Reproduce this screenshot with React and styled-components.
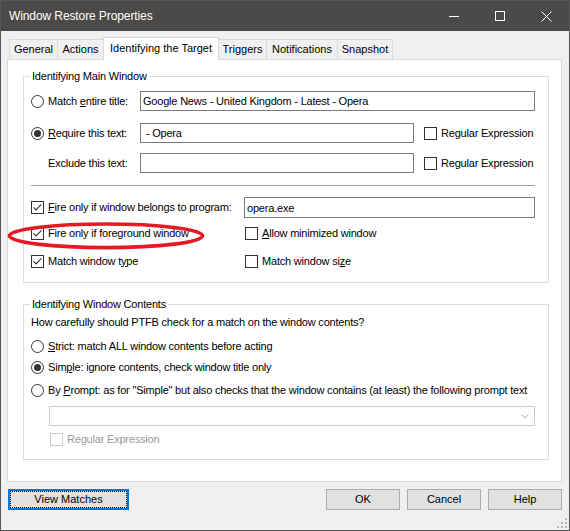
import React from 'react';
import styled, { createGlobalStyle } from 'styled-components';

const GlobalStyle = createGlobalStyle`
  html, body { margin: 0; padding: 0; background: #f0f0f0; }
  body {
    font-family: "Liberation Sans", Arial, sans-serif;
    font-size: 11px;
    letter-spacing: -0.2px;
    line-height: 13px;
    color: #000;
  }
  * { box-sizing: border-box; }
`;

const Window = styled.div`
  position: relative;
  width: 570px;
  height: 531px;
  border: 1px solid #585755;
  background: #f0f0f0;
  display: flex;
  flex-direction: column;
`;

const TitleBar = styled.div`
  height: 30px;
  flex: none;
  background: #4b4a48;
  color: #fff;
  display: flex;
  align-items: center;
  padding-left: 8px;
  font-size: 12px;
`;

const TitleText = styled.span`
  flex: 1;
  letter-spacing: -0.1px;
`;

const CaptionButton = styled.div`
  width: 46px;
  height: 30px;
  display: flex;
  align-items: center;
  justify-content: center;
`;

const Body = styled.div`
  flex: 1;
  padding: 6px 7px 0 6px;
  display: flex;
  flex-direction: column;
`;

const TabRow = styled.div`
  position: relative;
  z-index: 1;
  height: 22px;
  display: flex;
  align-items: flex-end;
  padding-left: 2px;
`;

const Tab = styled.div`
  width: ${p => p.$w}px;
  height: ${p => (p.$active ? 23 : 20)}px;
  margin-bottom: ${p => (p.$active ? -1 : 0)}px;
  margin-left: ${p => (p.$first ? 0 : -1)}px;
  border: 1px solid #d9d9d9;
  border-bottom: none;
  background: ${p => (p.$active ? '#fff' : '#f0f0f0')};
  display: flex;
  align-items: center;
  justify-content: center;
  padding-bottom: ${p => (p.$active ? 2 : 0)}px;
  white-space: nowrap;
  letter-spacing: 0;
`;

const Panel = styled.div`
  height: 423px;
  background: #fff;
  border: 1px solid #d9d9d9;
  padding: 16px 12px 0 15px;
  display: flex;
  flex-direction: column;
  gap: 21px;
`;

const Group = styled.div`
  position: relative;
  height: ${p => p.$h}px;
  border: 1px solid #dcdcdc;
  padding-left: 7px;
  display: flex;
  flex-direction: column;
`;

const Legend = styled.span`
  position: absolute;
  top: -7px;
  left: 6px;
  padding: 0 2px;
  background: #fff;
`;

const Row = styled.div`
  display: flex;
  align-items: center;
  height: ${p => p.$h}px;
  margin-top: ${p => p.$mt}px;
  margin-left: ${p => p.$ml || 0}px;
  white-space: nowrap;
`;

const Cell = styled.div`
  width: ${p => p.$w}px;
  padding-left: ${p => p.$pl || 0}px;
  display: flex;
  align-items: center;
  flex: none;
`;

const Separator = styled.div`
  width: 504px;
  height: 1px;
  background: #a0a0a0;
  margin-top: ${p => p.$mt}px;
`;

const TextBox = styled.input`
  width: ${p => p.$w}px;
  height: ${p => p.$h || 20}px;
  border: 1px solid #7a7a7a;
  padding: 0 2px;
  font: inherit;
  letter-spacing: inherit;
  color: #000;
  background: #fff;
  outline: none;
  white-space: pre;
`;

const Combo = styled.div`
  width: 486px;
  height: 20px;
  border: 1px solid #cccccc;
  background: #fff;
  display: flex;
  align-items: center;
  justify-content: flex-end;
  padding-right: 5px;
`;

const Choice = styled.label`
  display: flex;
  align-items: center;
  gap: 4px;
  margin-left: ${p => p.$ml || 0}px;
  color: ${p => (p.$disabled ? '#9a9a9a' : '#000')};
`;

const RadioBox = styled.span`
  position: relative;
  width: 13px;
  height: 13px;
  border: 1px solid #333;
  border-radius: 50%;
  background: #fff;
  flex: none;
  &::after {
    content: '';
    display: ${p => (p.$on ? 'block' : 'none')};
    position: absolute;
    left: 2px;
    top: 2px;
    width: 7px;
    height: 7px;
    border-radius: 50%;
    background: #333;
  }
`;

const CheckBox = styled.span`
  width: 13px;
  height: 13px;
  border: 1px solid ${p => (p.$disabled ? '#cccccc' : '#333')};
  background: #fff;
  flex: none;
  display: flex;
`;

const Key = styled.span`
  text-decoration: underline;
  text-underline-offset: 1px;
`;

const ButtonRow = styled.div`
  display: flex;
  margin-top: 7px;
  padding-left: 1px;
  gap: 7px;
  letter-spacing: 0;
`;

const Button = styled.div`
  width: ${p => p.$w || 74}px;
  height: 21px;
  margin-left: ${p => (p.$push ? 'auto' : '0')};
  background: #e1e1e1;
  border: ${p => (p.$focus ? '2px solid #0078d7' : '1px solid #adadad')};
  display: flex;
  align-items: center;
  justify-content: center;
  padding: ${p => (p.$focus ? '0' : '1px')};
`;

const FocusRing = styled.div`
  width: 100%;
  height: 100%;
  outline: 1px dotted #000;
  outline-offset: -1px;
  display: flex;
  align-items: center;
  justify-content: center;
`;

const Highlight = styled.svg`
  position: absolute;
  left: 4px;
  top: 218px;
  pointer-events: none;
`;

const Grip = styled.svg`
  position: absolute;
  right: 1px;
  bottom: 1px;
`;

const Radio = ({ on, children }) => (
  <Choice>
    <RadioBox $on={on} />
    <span>{children}</span>
  </Choice>
);

const Check = ({ on, disabled, ml, children }) => (
  <Choice $ml={ml} $disabled={disabled}>
    <CheckBox $disabled={disabled}>
      {on && (
        <svg width="11" height="11" viewBox="0 0 11 11">
          <polyline points="1.6,5.4 4,7.9 9.4,2.4" fill="none" stroke="#333" strokeWidth="1.1" />
        </svg>
      )}
    </CheckBox>
    <span>{children}</span>
  </Choice>
);

const tabs = [
  { label: 'General', w: 49 },
  { label: 'Actions', w: 47 },
  { label: 'Identifying the Target', w: 116, active: true },
  { label: 'Triggers', w: 49 },
  { label: 'Notifications', w: 72 },
  { label: 'Snapshot', w: 56 },
];

export default function App() {
  return (
    <>
      <GlobalStyle />
      <Window>
        <TitleBar>
          <TitleText>Window Restore Properties</TitleText>
          <CaptionButton>
            <svg width="10" height="10" viewBox="0 0 10 10">
              <line x1="0" y1="5.5" x2="10" y2="5.5" stroke="#fff" strokeWidth="1" />
            </svg>
          </CaptionButton>
          <CaptionButton>
            <svg width="10" height="10" viewBox="0 0 10 10">
              <rect x="0.5" y="0.5" width="9" height="9" fill="none" stroke="#fff" strokeWidth="1" />
            </svg>
          </CaptionButton>
          <CaptionButton>
            <svg width="11" height="11" viewBox="0 0 11 11">
              <path d="M0.5 0.5 L10.5 10.5 M10.5 0.5 L0.5 10.5" stroke="#fff" strokeWidth="1" />
            </svg>
          </CaptionButton>
        </TitleBar>

        <Body>
          <TabRow>
            {tabs.map((t, i) => (
              <Tab key={t.label} $w={t.w} $active={t.active} $first={i === 0}>
                {t.label}
              </Tab>
            ))}
          </TabRow>

          <Panel>
            <Group $h={207}>
              <Legend>Identifying Main Window</Legend>
              <Row $h={20} $mt={14}>
                <Cell $w={109}>
                  <Radio>Match <Key>e</Key>ntire title:</Radio>
                </Cell>
                <TextBox $w={395} readOnly value="Google News - United Kingdom - Latest - Opera" />
              </Row>
              <Row $h={20} $mt={12}>
                <Cell $w={109}>
                  <Radio on><Key>R</Key>equire this text:</Radio>
                </Cell>
                <TextBox $w={274} readOnly value=" - Opera" />
                <Check ml={10}>Regular Expression</Check>
              </Row>
              <Row $h={20} $mt={10}>
                <Cell $w={109} $pl={17}>Exclude this text:</Cell>
                <TextBox $w={274} readOnly value="" />
                <Check ml={10}>Regular Expression</Check>
              </Row>
              <Separator $mt={12} />
              <Row $h={21} $mt={11}>
                <Cell $w={213}>
                  <Check on><Key>F</Key>ire only if window belongs to program:</Check>
                </Cell>
                <TextBox $w={291} $h={21} readOnly value="opera.exe" />
              </Row>
              <Row $h={14} $mt={8}>
                <Cell $w={214}>
                  <Check on>Fire only if foreground window</Check>
                </Cell>
                <Check><Key>A</Key>llow minimized window</Check>
              </Row>
              <Row $h={14} $mt={14}>
                <Cell $w={214}>
                  <Check on>Match window t<Key>y</Key>pe</Check>
                </Cell>
                <Check>Match window si<Key>z</Key>e</Check>
              </Row>
            </Group>

            <Group $h={156}>
              <Legend>Identifying Window Contents</Legend>
              <Row $h={14} $mt={10}>How carefully should PTFB check for a match on the window contents?</Row>
              <Row $h={14} $mt={10}>
                <Radio><Key>S</Key>trict: match ALL window contents before acting</Radio>
              </Row>
              <Row $h={14} $mt={7}>
                <Radio on>Sim<Key>p</Key>le: ignore contents, check window title only</Radio>
              </Row>
              <Row $h={14} $mt={9}>
                <Radio>By <Key>P</Key>rompt: as for "Simple" but also checks that the window contains (at least) the following prompt text</Radio>
              </Row>
              <Row $h={20} $mt={9} $ml={18}>
                <Combo>
                  <svg width="8" height="5" viewBox="0 0 8 5">
                    <polyline points="0.5,0.5 4,4 7.5,0.5" fill="none" stroke="#a8a8a8" strokeWidth="1" />
                  </svg>
                </Combo>
              </Row>
              <Row $h={14} $mt={6} $ml={19}>
                <Check disabled>Regular Expression</Check>
              </Row>
            </Group>
          </Panel>

          <ButtonRow>
            <Button $w={121} $focus>
              <FocusRing>View Matches</FocusRing>
            </Button>
            <Button $push>OK</Button>
            <Button>Cancel</Button>
            <Button>Help</Button>
          </ButtonRow>
        </Body>

        <Highlight width="206" height="34" viewBox="0 0 206 34">
          <ellipse cx="101" cy="16.8" rx="96.6" ry="11.8" fill="none" stroke="#e41b23" strokeWidth="3.6" />
        </Highlight>

        <Grip width="12" height="12" viewBox="0 0 12 12">
          <g fill="#b8b8b8">
            <rect x="9" y="1" width="2" height="2" />
            <rect x="5" y="5" width="2" height="2" />
            <rect x="9" y="5" width="2" height="2" />
            <rect x="1" y="9" width="2" height="2" />
            <rect x="5" y="9" width="2" height="2" />
            <rect x="9" y="9" width="2" height="2" />
          </g>
        </Grip>
      </Window>
    </>
  );
}
